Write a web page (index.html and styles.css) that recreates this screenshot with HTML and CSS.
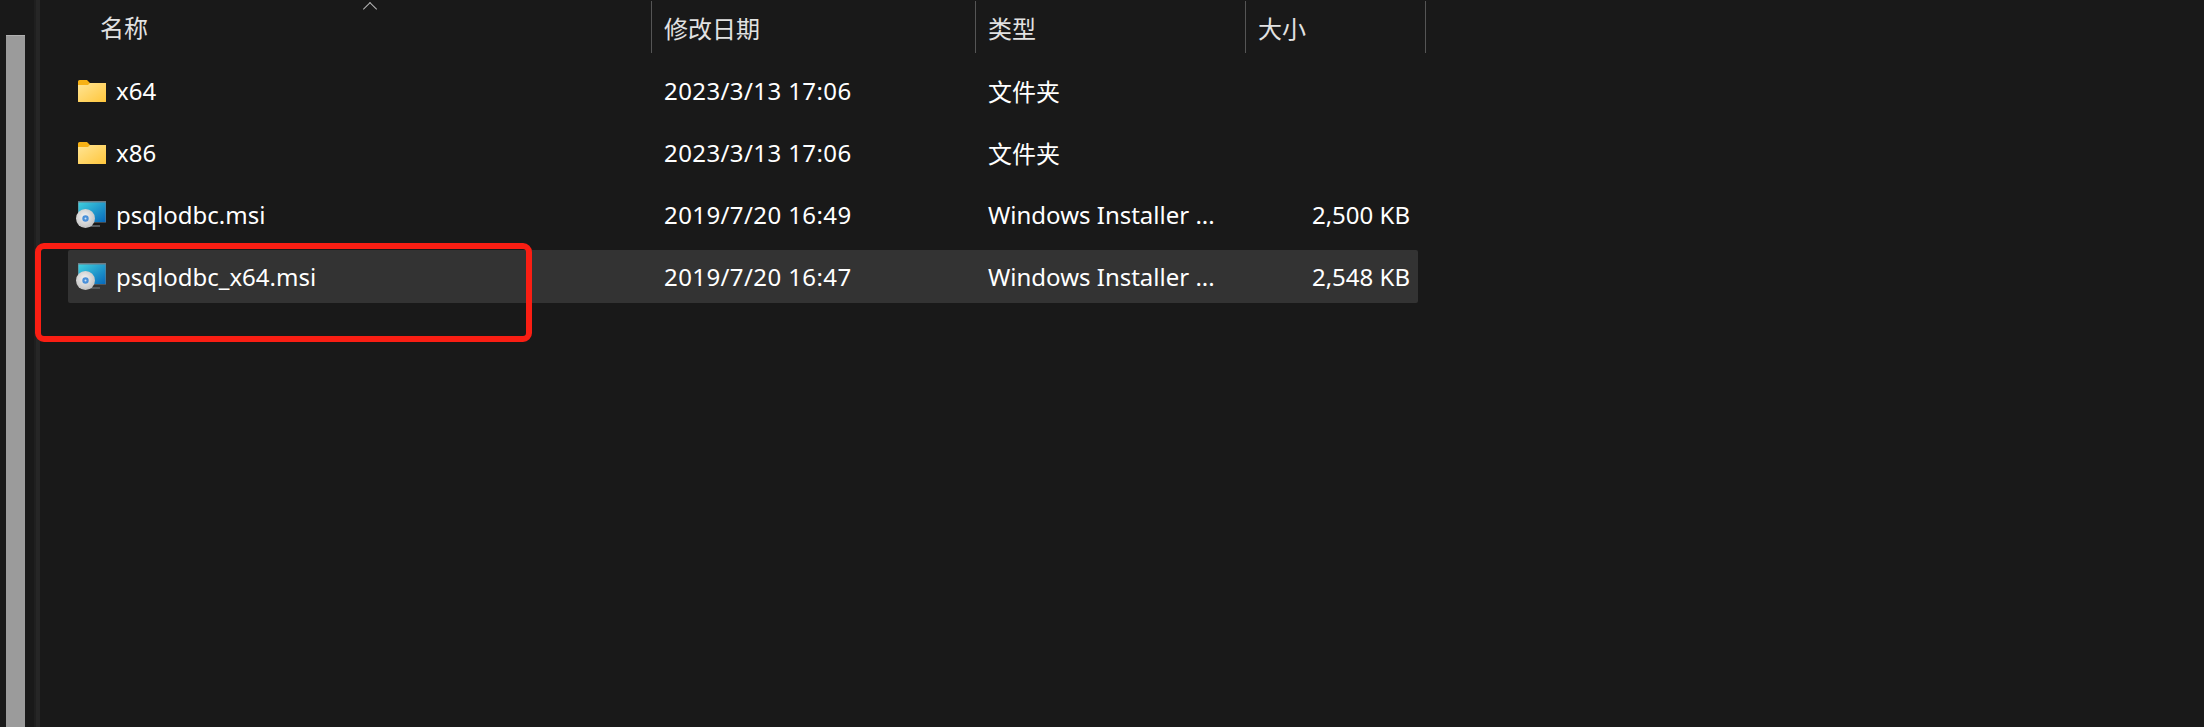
FILE: index.html
```html
<!DOCTYPE html>
<html lang="zh">
<head>
  <meta charset="UTF-8">
  <title>psqlodbc</title>
  <link rel="stylesheet" href="styles.css">
</head>
<body>
  <svg class="defs" width="0" height="0">
    <defs>
      <linearGradient id="folderFill" x1="0" y1="0" x2="1" y2="1">
        <stop offset="0" stop-color="#ffe595"/>
        <stop offset="1" stop-color="#ffc63c"/>
      </linearGradient>
      <linearGradient id="screenFill" x1="0" y1="0" x2="1" y2="1">
        <stop offset="0" stop-color="#3fd0de"/>
        <stop offset="1" stop-color="#0668bb"/>
      </linearGradient>
      <radialGradient id="discFill" cx="0.45" cy="0.4" r="0.7">
        <stop offset="0" stop-color="#f4f4f4"/>
        <stop offset="1" stop-color="#b9b9b9"/>
      </radialGradient>
      <symbol id="folder" viewBox="0 0 28 22">
        <path d="M0 1.5A1.5 1.5 0 0 1 1.500 0H9l3 3h16v19H0z" fill="#f6b115"/>
        <path d="M0 5h10l2-2h16v18a1 1 0 0 1-1 1H1a1 1 0 0 1-1-1z" fill="url(#folderFill)"/>
      </symbol>
      <symbol id="msi" viewBox="0 0 30 28">
        <rect x="2" y="0" width="28" height="21.500" fill="#6f7b84"/>
        <rect x="2.500" y="1.500" width="27" height="19.500" fill="url(#screenFill)"/>
        <rect x="13" y="24" width="11" height="2" fill="#55595c"/>
        <circle cx="9.500" cy="17.500" r="9.500" fill="url(#discFill)"/>
        <circle cx="9.500" cy="17.500" r="3.200" fill="#4a90d9"/>
        <circle cx="9.500" cy="17.500" r="1" fill="#cfe0f2"/>
      </symbol>
    </defs>
  </svg>

  <div class="window">
    <div class="gutter"><div class="scroll-thumb"></div></div>
    <div class="pane-line"></div>

    <div class="details">
      <div class="head">
        <div class="head-cell name-col">名称<span class="sort-caret"></span></div>
        <div class="head-cell">修改日期</div>
        <div class="head-cell">类型</div>
        <div class="head-cell">大小</div>
      </div>

      <div class="row">
        <div class="cell name-col"><svg class="icon folder-icon"><use href="#folder"/></svg>x64</div>
        <div class="cell date">2023/3/13 17:06</div>
        <div class="cell">文件夹</div>
        <div class="cell size"></div>
      </div>
      <div class="row">
        <div class="cell name-col"><svg class="icon folder-icon"><use href="#folder"/></svg>x86</div>
        <div class="cell date">2023/3/13 17:06</div>
        <div class="cell">文件夹</div>
        <div class="cell size"></div>
      </div>
      <div class="row">
        <div class="cell name-col"><svg class="icon msi-icon"><use href="#msi"/></svg>psqlodbc.msi</div>
        <div class="cell date">2019/7/20 16:49</div>
        <div class="cell">Windows Installer ...</div>
        <div class="cell size">2,500 KB</div>
      </div>
      <div class="row selected">
        <div class="cell name-col"><svg class="icon msi-icon"><use href="#msi"/></svg>psqlodbc_x64.msi</div>
        <div class="cell date">2019/7/20 16:47</div>
        <div class="cell">Windows Installer ...</div>
        <div class="cell size">2,548 KB</div>
      </div>

      <div class="red-box"></div>
    </div>
  </div>
</body>
</html>
```

FILE: styles.css
```css
html, body {
  margin: 0;
  padding: 0;
  height: 100%;
  overflow: hidden;
}
body {
  background-color: #191919;
  color: #fff;
  font-family: 'Noto Sans', 'Noto Sans CJK SC', sans-serif;
  font-size: 24px;
}
.defs {
  display: block;
  height: 0;
}
.window {
  display: flex;
  height: 727px;
}
.gutter {
  width: 34px;
  padding: 35px 9px 0 6px;
  box-sizing: border-box;
}
.scroll-thumb {
  height: 100%;
  background-color: #9b9b9b;
  border-top: 1px solid #b0b0b0;
  box-sizing: border-box;
}
.pane-line {
  width: 6px;
  background: linear-gradient(to right, #1f1f1f 0 2px, #262626 2px 100%);
}
.details {
  position: relative;
  padding: 1px 0 0 28px;
  flex: 1;
}
.head, .row {
  display: grid;
  grid-template-columns: 584px 324px 269px 173px;
}
.head {
  width: 1358px;
  height: 52px;
  margin-bottom: 11px;
  grid-template-columns: 584px 324px 270px 180px;
  color: #e2e2e2;
}
.head-cell {
  position: relative;
  display: flex;
  align-items: center;
  padding-left: 12px;
  border-right: 1px solid #555;
  box-sizing: border-box;
}
.head-cell.name-col {
  padding-left: 32px;
  padding-bottom: 2px;
}
.sort-caret {
  position: absolute;
  left: 297px;
  top: 3px;
  width: 9px;
  height: 9px;
  border-left: 1px solid #b5b5b5;
  border-top: 1px solid #b5b5b5;
  transform: rotate(45deg);
}
.row {
  width: 1350px;
  height: 53px;
  margin-bottom: 9px;
  border-radius: 2px;
}
.row.selected {
  background-color: #333;
}
.cell {
  display: flex;
  align-items: center;
  padding-left: 12px;
  white-space: nowrap;
}
.cell.date {
  letter-spacing: 0.4px;
}
.cell.name-col {
  padding-left: 10px;
}
.cell.size {
  justify-content: flex-end;
  padding: 0 8px 0 0;
}
.icon {
  flex: none;
  margin-right: 10px;
}
.folder-icon {
  width: 28px;
  height: 22px;
}
.msi-icon {
  width: 30px;
  height: 28px;
  margin-left: -2px;
}
.red-box {
  position: absolute;
  left: -5px;
  top: 243px;
  width: 497px;
  height: 99px;
  border: 6px solid #fa1e13;
  border-radius: 9px;
  box-sizing: border-box;
}
```
